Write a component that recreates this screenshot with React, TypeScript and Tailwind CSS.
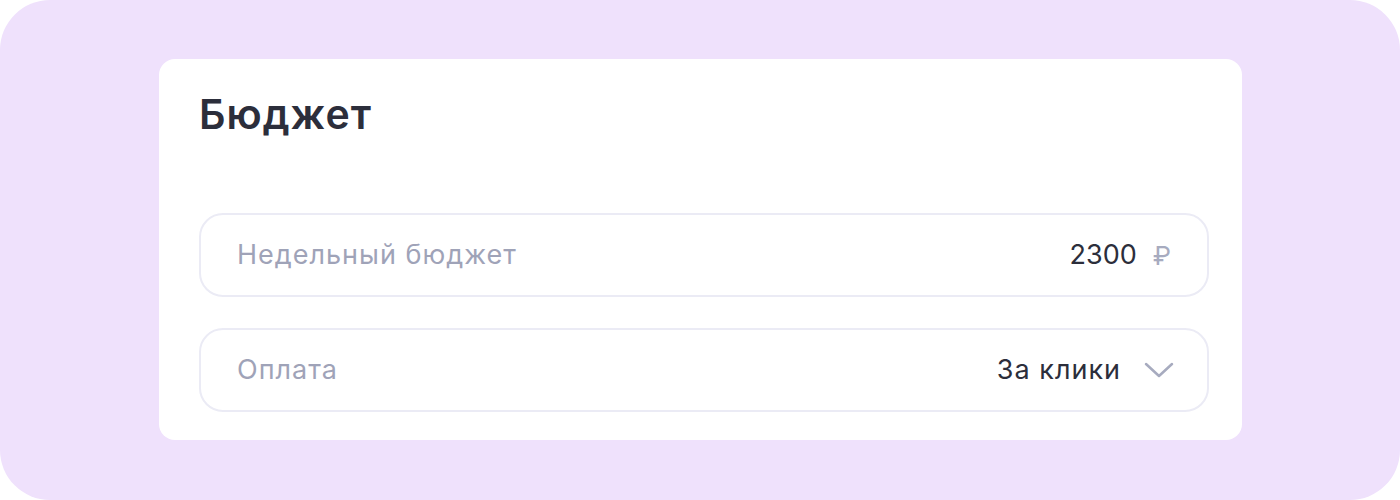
export default function App() {
  return (
    <div className="w-[1400px] h-[500px] bg-white" style={{ fontFamily: 'Inter, "Noto Sans", sans-serif' }}>
      <div className="w-full h-full rounded-[50px] bg-[#efe1fc] pt-[59px] pl-[159px]">
        <div className="w-[1083px] h-[381px] bg-white rounded-[16px] pl-10 pt-[29px]">
          <h2 className="text-[41px] leading-[52px] font-semibold text-[#2c2e3b] tracking-[1px]">Бюджет</h2>
          <div className="mt-[73px] flex flex-col gap-[31px]">
            <div className="w-[1010px] h-[84px] rounded-[24px] border-2 border-[#ebebf5] flex items-center justify-between pl-[36px] pr-[36px]">
              <span className="text-[27px] text-[#9fa3b8] tracking-[1px]">Недельный бюджет</span>
              <span className="flex items-center gap-[16px]">
                <span className="text-[27px] text-[#2c2e3b]">2300</span>
                <span className="text-[26px] text-[#a7abbf]">₽</span>
              </span>
            </div>
            <div className="w-[1010px] h-[84px] rounded-[24px] border-2 border-[#ebebf5] flex items-center justify-between pl-[36px] pr-[32px]">
              <span className="text-[27px] text-[#9fa3b8] tracking-[1px]">Оплата</span>
              <span className="flex items-center gap-[22px]">
                <span className="text-[27px] text-[#2c2e3b] tracking-[1px]">За клики</span>
                <svg width="32" height="20" viewBox="0 0 32 20" fill="none">
                  <path d="M3 4l13 12L29 4" stroke="#a7abbf" strokeWidth="2.5" strokeLinecap="round" strokeLinejoin="round" />
                </svg>
              </span>
            </div>
          </div>
        </div>
      </div>
    </div>
  );
}
